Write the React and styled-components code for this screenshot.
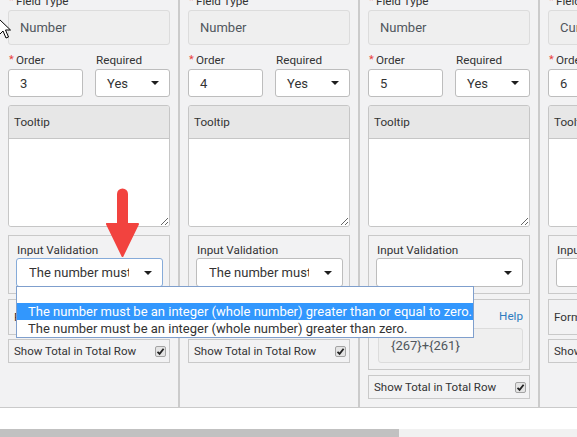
import React from 'react';
import styled, { createGlobalStyle } from 'styled-components';

const Global = createGlobalStyle`
  html, body { margin: 0; padding: 0; background: #fff; }
  body { font-family: Roboto, "Liberation Sans", Arial, sans-serif; color: #333; }
  * { box-sizing: border-box; }
`;

const Page = styled.div`
  position: relative;
  width: 577px;
  height: 437px;
  overflow: hidden;
  display: flex;
  flex-direction: column;
  background: #fff;
`;

const Board = styled.div`
  flex: none;
  display: flex;
  height: 408px;
  border-bottom: 1px solid #cacaca;
  overflow: hidden;
`;

const Column = styled.section`
  flex: 0 0 180px;
  padding: 0 8px 0 8px;
  background: #f2f2f3;
  border-right: 2px solid #cbcbcb;
`;

const Stack = styled.div`
  display: flex;
  flex-direction: column;
  margin-top: -7px;
`;

const Label = styled.div`
  height: 16px;
  font-size: 11.7px;
  line-height: 16px;
  color: #333;
  white-space: nowrap;
  overflow: hidden;
  padding-left: ${p => (p.$inset ? p.$inset : 0)}px;
`;

const Star = styled.span`
  position: relative;
  top: -1px;
  display: inline-block;
  width: 8px;
  padding-left: 1px;
  color: #e8413c;
  font-size: 11px;
  line-height: 16px;
`;

const ReadOnly = styled.div`
  height: 35px;
  margin-top: 1px;
  padding-left: 11px;
  display: flex;
  align-items: center;
  border: 1px solid #dcdcdc;
  border-radius: 3px;
  background: #efefef;
  font-size: 13px;
  color: #50565d;
  white-space: nowrap;
  overflow: hidden;
`;

const Pair = styled.div`
  display: grid;
  grid-template-columns: 75px 1fr;
  column-gap: 12px;
  margin-top: 7px;
`;

const TextInput = styled.div`
  height: 28px;
  margin-top: 1px;
  padding-left: 11px;
  display: flex;
  align-items: center;
  border: 1px solid #bdbdbd;
  border-radius: 3px;
  background: #fff;
  font-size: 13px;
  color: #333;
`;

const SelectBox = styled.div`
  position: relative;
  height: ${p => p.$h || 28}px;
  margin-top: ${p => p.$mt || 0}px;
  padding: 0 10px 0 ${p => p.$pl || 11}px;
  display: flex;
  align-items: center;
  justify-content: space-between;
  border: 1px solid ${p => (p.$focused ? '#86abd9' : '#bdbdbd')};
  border-radius: 3px;
  background: #fff;
  font-size: 13px;
  color: #333;
`;

const SelectText = styled.span`
  display: block;
  max-width: 100px;
  overflow: hidden;
  white-space: nowrap;
`;

const Caret = styled.span`
  flex: none;
  width: 0;
  height: 0;
  border-left: 4px solid transparent;
  border-right: 4px solid transparent;
  border-top: 4px solid #1e1e1e;
`;

const Panel = styled.div`
  margin-top: 8px;
  border: 1px solid #c6c6c6;
  border-radius: 3px;
  overflow: hidden;
`;

const PanelHeader = styled.div`
  height: 32px;
  padding-left: 5px;
  display: flex;
  align-items: center;
  background: #e7e7e7;
  font-size: 11.7px;
  color: #333;
  white-space: nowrap;
`;

const Area = styled.textarea`
  display: block;
  width: 100%;
  height: 88px;
  margin: 0;
  border: 0;
  border-top: 1px solid #c6c6c6;
  background: #fff;
  resize: vertical;
  outline: none;
`;

const Group = styled.div`
  margin-top: ${p => p.$mt || 8}px;
  padding: ${p => p.$pad};
  border: 1px solid #c9c9c9;
  background: #f2f2f3;
`;

const GroupHead = styled.div`
  display: flex;
  justify-content: space-between;
  font-size: 11.7px;
  line-height: 16px;
  white-space: nowrap;
`;

const HelpLink = styled.a`
  color: #2f7cbf;
  text-decoration: none;
`;

const FormulaField = styled(ReadOnly)`
  margin-top: 4px;
  margin-left: 2px;
  padding-left: 12px;
`;

const ToggleRow = styled.div`
  margin-top: ${p => p.$mt || 4}px;
  height: 24px;
  padding: 0 3px 0 5px;
  display: flex;
  align-items: center;
  justify-content: space-between;
  border: 1px solid #c9c9c9;
  font-size: 11.5px;
  color: #333;
  white-space: nowrap;
  overflow: hidden;
`;

const Check = styled.span`
  flex: none;
  width: 11px;
  height: 11px;
  border: 1px solid #a3a3a3;
  border-radius: 2px;
  background: #e4e4e4;
  display: flex;
  align-items: center;
  justify-content: center;
`;

const ListBox = styled.div`
  position: absolute;
  top: 100%;
  left: -1px;
  z-index: 20;
  width: 458px;
  padding-top: 16px;
  border: 1px solid #7f9fcd;
  background: #fff;
`;

const Option = styled.div`
  height: 17px;
  line-height: 17px;
  padding-left: 11px;
  font-size: 13px;
  white-space: nowrap;
  color: ${p => (p.$active ? '#fff' : '#333')};
  background: ${p => (p.$active ? '#3297fd' : 'transparent')};
`;

const Gap = styled.div`
  flex: 1;
`;

const Scrollbar = styled.div`
  flex: none;
  height: 8px;
  background: #f1f1f1;
`;

const Thumb = styled.div`
  width: 399px;
  height: 100%;
  background: #c1c1c1;
`;

const Pointer = styled.svg`
  position: absolute;
  left: -2px;
  top: 18px;
  z-index: 30;
`;

const Marker = styled.svg`
  position: absolute;
  left: 104px;
  top: 186px;
  z-index: 30;
`;

const RULES = [
  'The number must be an integer (whole number) greater than or equal to zero.',
  'The number must be an integer (whole number) greater than zero.',
];

const fields = [
  { type: 'Number', order: '3', required: 'Yes', rule: RULES[0], open: true },
  { type: 'Number', order: '4', required: 'Yes', rule: RULES[0] },
  { type: 'Number', order: '5', required: 'Yes', rule: '', formula: '{267}+{261}' },
  { type: 'Currency', order: '6', required: 'Yes', rule: '' },
];

const Tick = () => (
  <svg width="9" height="9" viewBox="0 0 9 9">
    <path d="M1.5 4.8 L3.6 6.8 L7.6 1.8" fill="none" stroke="#222" strokeWidth="1.8" />
  </svg>
);

function FieldColumn({ f }) {
  return (
    <Column>
      <Stack>
        <Label><Star>*</Star>Field Type</Label>
        <ReadOnly>{f.type}</ReadOnly>

        <Pair>
          <div>
            <Label><Star>*</Star>Order</Label>
            <TextInput>{f.order}</TextInput>
          </div>
          <div>
            <Label $inset={1}>Required</Label>
            <SelectBox $mt={1} $pl={11}>
              <span>{f.required}</span>
              <Caret />
            </SelectBox>
          </div>
        </Pair>

        <Panel>
          <PanelHeader>Tooltip</PanelHeader>
          <Area defaultValue="" />
        </Panel>

        <Group $pad="6px 6px 6px 7px">
          <Label $inset={1}>Input Validation</Label>
          <SelectBox $h={29} $pl={12} $focused={f.open}>
            <SelectText>{f.rule}</SelectText>
            <Caret />
            {f.open && (
              <ListBox>
                <Option $active>{RULES[0]}</Option>
                <Option>{RULES[1]}</Option>
              </ListBox>
            )}
          </SelectBox>
        </Group>

        {f.formula ? (
          <Group $mt={5} $pad="8px 6px 6px 7px">
            <GroupHead>
              <span>Formula</span>
              <HelpLink href="#help">Help</HelpLink>
            </GroupHead>
            <FormulaField>{f.formula}</FormulaField>
          </Group>
        ) : (
          <Group $mt={5} $pad="9px 6px 9px 5px">
            <GroupHead>
              <span>Formula</span>
            </GroupHead>
          </Group>
        )}

        <ToggleRow $mt={f.formula ? 5 : 4}>
          <span>Show Total in Total Row</span>
          <Check><Tick /></Check>
        </ToggleRow>
      </Stack>
    </Column>
  );
}

export default function App() {
  return (
    <Page>
      <Global />
      <Board>
        {fields.map((f, i) => (
          <FieldColumn key={i} f={f} />
        ))}
      </Board>
      <Gap />
      <Scrollbar>
        <Thumb />
      </Scrollbar>

      <Pointer width="14" height="22" viewBox="0 0 14 22">
        <path d="M1 1 L1 17 L5 13 L8 20 L10.5 19 L7.5 12 L12.5 12 Z" fill="#fff" stroke="#000" strokeWidth="1" strokeLinejoin="round" />
      </Pointer>

      <Marker width="36" height="74" viewBox="0 0 36 74">
        <line x1="18.5" y1="8" x2="18.5" y2="42" stroke="#f2433f" strokeWidth="11" strokeLinecap="round" />
        <path d="M3 38 L34 38 L18.5 70 Z" fill="#f2433f" stroke="#f2433f" strokeWidth="2" strokeLinejoin="round" />
      </Marker>
    </Page>
  );
}
